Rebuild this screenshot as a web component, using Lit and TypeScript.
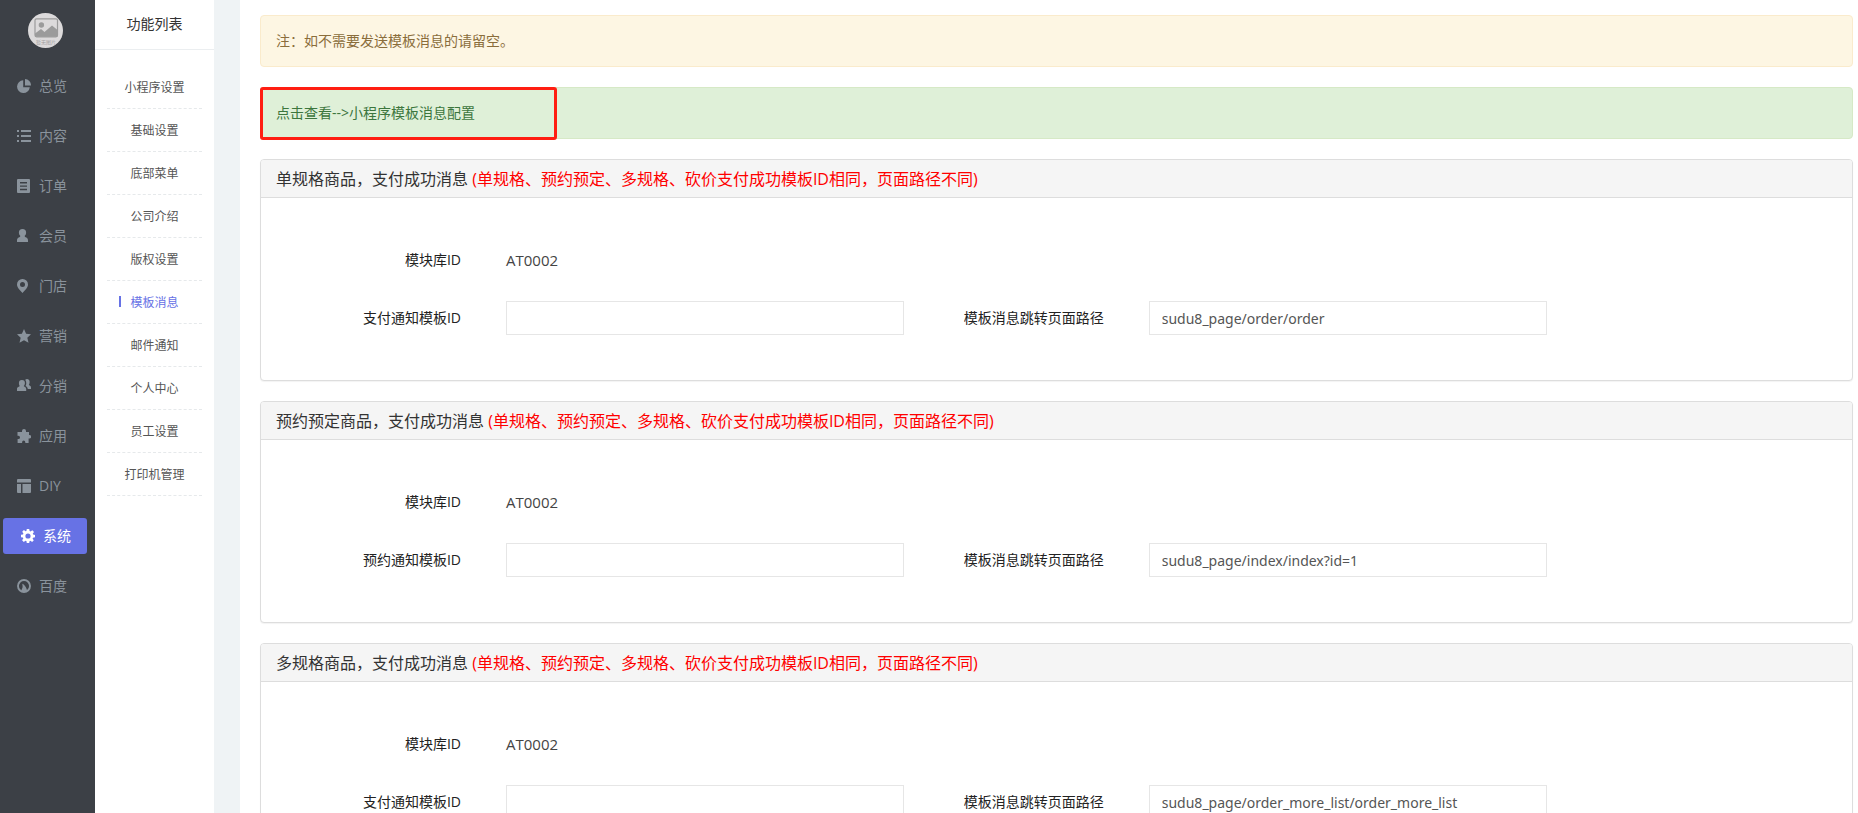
import { LitElement, html, css, svg, nothing } from "lit";
import { customElement, property } from "lit/decorators.js";

const icons: Record<string, unknown> = {
  overview: svg`<path d="M6.200 1.200A6.400 6.400 0 1 0 12.800 8.300H6.200Z"/><path d="M8 0v6.400h6A6.200 6.200 0 0 0 8 0Z"/>`,
  content: svg`<path d="M0 1h2v2H0zM4 1h10v2H4zM0 6h2v2H0zM4 6h10v2H4zM0 11h2v2H0zM4 11h10v2H4z"/>`,
  order: svg`<path fill-rule="evenodd" d="M1 0h11a1 1 0 0 1 1 1v12a1 1 0 0 1-1 1H1a1 1 0 0 1-1-1V1a1 1 0 0 1 1-1Zm2 3v1.400h7V3Zm0 3.400v1.400h7V6.400Zm0 3.400v1.400h7V9.800Z"/>`,
  member: svg`<path d="M5.500 0a3.600 3.600 0 0 1 3.600 3.700c0 1.500-.7 2.500-1.500 3.200.2.800.9 1.100 1.700 1.500 1.200.6 1.700 1.500 1.700 2.800V13H0v-1.800c0-1.300.5-2.200 1.700-2.800.8-.4 1.500-.7 1.700-1.500C2.600 6.200 1.900 5.200 1.900 3.700A3.600 3.600 0 0 1 5.500 0Z"/>`,
  store: svg`<path fill-rule="evenodd" d="M5.500 0A5.400 5.400 0 0 1 11 5.400C11 8.700 7.700 11.400 5.500 14 3.300 11.400 0 8.700 0 5.400A5.400 5.400 0 0 1 5.500 0Zm0 3a2.500 2.500 0 1 0 0 5 2.500 2.500 0 0 0 0-5Z"/>`,
  marketing: svg`<path d="M7 0l2.100 4.800 4.900.5-3.700 3.400 1.200 5L7 11.200l-4.500 2.500 1.200-5L0 5.300l4.900-.5Z"/>`,
  referral: svg`<path d="M5 1a2.900 2.900 0 0 1 2.900 3c0 1.300-.5 2.300-1.200 3 .3.900 2.500.9 2.500 3v2H0v-2c0-2.100 2.500-2.100 2.700-3C2.100 6.300 1.900 5.300 1.900 4A3 3 0 0 1 5 1Z"/><path d="M8.200.8A2.600 2.600 0 0 1 12.600 3c0 1.300-.2 2.100-.8 2.800.3.800 2.200.8 2.200 2.700V10h-3.200c-.2-1.900-1.200-2.600-2.200-3.100C9.700 4.800 9.400 2.500 8.200.8Z"/>`,
  apps: svg`<path d="M5 2a2 2 0 1 1 4 0v1h3v3h.4a1.800 1.800 0 1 1 0 3.600H11.600V14H8.300v-.8a1.600 1.600 0 0 0-3.200 0V14H.6V10h.8a1.600 1.600 0 0 0 0-3.200H.5V3H5Z"/>`,
  diy: svg`<path d="M1 0h12a1 1 0 0 1 1 1v2.500H0V1a1 1 0 0 1 1-1ZM0 5h4v9H1a1 1 0 0 1-1-1ZM5.500 5H14v8a1 1 0 0 1-1 1H5.500Z"/>`,
  system: svg`<path fill-rule="evenodd" d="M5.800 0h2.400l.4 2 1 .4L11.300 1.200 13 2.900 11.800 4.600l.3.900 1.900.4v2.400l-2 .4-.4 1 1.200 1.600-1.700 1.700-1.600-1.200-1 .4L8.200 14H5.800l-.4-1.900-1-.4-1.600 1.200-1.700-1.700 1.200-1.600-.4-1L0 8.200V5.800l2-.4.4-1L1.200 2.800 2.900 1.100l1.600 1.200.9-.3ZM7 4.400a2.600 2.600 0 1 0 0 5.200 2.600 2.600 0 0 0 0-5.200Z"/>`,
  baidu: svg`<circle cx="7" cy="7" r="6" fill="none" stroke="currentColor" stroke-width="1.900"/><path d="M5.300 4.800c1.600.6 4.500 3.600 4.900 7.200H4.500c-.3-1.700 1-2.400 1.100-4 .1-1.100-.2-2-.3-3.200Z"/>`,
};

const mainMenu = [
  { icon: "overview", label: "总览" },
  { icon: "content", label: "内容" },
  { icon: "order", label: "订单" },
  { icon: "member", label: "会员" },
  { icon: "store", label: "门店" },
  { icon: "marketing", label: "营销" },
  { icon: "referral", label: "分销" },
  { icon: "apps", label: "应用" },
  { icon: "diy", label: "DIY" },
  { icon: "system", label: "系统", active: true },
  { icon: "baidu", label: "百度" },
];

const subMenu = [
  "小程序设置", "基础设置", "底部菜单", "公司介绍", "版权设置",
  "模板消息", "邮件通知", "个人中心", "员工设置", "打印机管理",
];

const NOTE = "(单规格、预约预定、多规格、砍价支付成功模板ID相同，页面路径不同)";

const panels = [
  { title: "单规格商品，支付成功消息", field: "支付通知模板ID", path: "sudu8_page/order/order" },
  { title: "预约预定商品，支付成功消息", field: "预约通知模板ID", path: "sudu8_page/index/index?id=1" },
  { title: "多规格商品，支付成功消息", field: "支付通知模板ID", path: "sudu8_page/order_more_list/order_more_list" },
];

@customElement("main-nav")
class MainNav extends LitElement {
  static styles = css`
    :host { display: block; background: #3c4046; }
    .logo { display: block; width: 35px; height: 35px; margin: 13px auto 20px 28px; }
    .caption { font-size: 5px; fill: #a5a3a4; text-anchor: middle; }
    .list { display: flex; flex-direction: column; gap: 14px; padding: 0 8px 0 3px; }
    .item {
      display: flex; align-items: center; gap: 8px; height: 36px; padding-left: 14px;
      border-radius: 3px; color: #8a939c; font-size: 14px; line-height: 20px; text-decoration: none;
    }
    .item.active { background: #6772e5; color: #fff; padding-left: 18px; }
    .icon { width: 14px; height: 14px; fill: currentColor; }
  `;
  render() {
    return html`
      <svg class="logo" viewBox="0 0 35 35">
        <circle cx="17.500" cy="17.500" r="17.500" fill="#dcdadb"/>
        <rect x="7" y="5.800" width="22.500" height="18" rx="1.500" fill="#dcdadb" stroke="#9b9b9b" stroke-width="1.200"/>
        <circle cx="13.400" cy="12" r="2.700" fill="#9b9b9b"/>
        <path d="M7 20.500l6-4.500 3.500 3 7.500-6.500 5.500 4.500v6.800H7Z" fill="#9b9b9b"/>
        <text class="caption" x="18" y="31">暂无图片</text>
      </svg>
      <nav class="list">
        ${mainMenu.map((m) => html`
          <a class="item ${m.active ? "active" : ""}" href="#" aria-current=${m.active ? "page" : nothing}>
            <svg class="icon" viewBox="0 0 14 14" aria-hidden="true">${icons[m.icon]}</svg>${m.label}
          </a>`)}
      </nav>`;
  }
}

@customElement("sub-nav")
class SubNav extends LitElement {
  static styles = css`
    :host { display: block; background: #fff; }
    .title {
      margin: 0; height: 49px; line-height: 48px; border-bottom: 1px solid #ebeef0;
      text-align: center; font-size: 14px; font-weight: 400; color: #333;
    }
    .list { padding: 16px 12px 0; font-family: "Noto Sans CJK SC", sans-serif; }
    .item {
      position: relative; display: block; height: 42px; line-height: 42px; text-align: center;
      border-bottom: 1px dashed #e6e9eb; font-size: 12px; color: #555; text-decoration: none;
    }
    .item.active { color: #6772e5; }
    .item.active::before {
      content: ""; position: absolute; left: 12px; top: 15px; width: 2px; height: 11px; background: #6772e5;
    }
  `;
  render() {
    return html`
      <h2 class="title">功能列表</h2>
      <nav class="list">
        ${subMenu.map((s) => html`<a class="item ${s === "模板消息" ? "active" : ""}" href="#">${s}</a>`)}
      </nav>`;
  }
}

@customElement("message-panel")
class MessagePanel extends LitElement {
  @property() heading = "";
  @property() field = "";
  @property() path = "";
  static styles = css`
    :host {
      display: block; background: #fff; border: 1px solid #ddd; border-radius: 4px;
      box-shadow: 0 1px 1px rgba(0, 0, 0, 0.05);
    }
    .heading {
      margin: 0; padding: 10px 15px 8px; line-height: 19px; font-size: 16px; font-weight: 400; color: #333;
      background: #f5f5f5; border-bottom: 1px solid #ddd; border-radius: 3px 3px 0 0;
    }
    .note { color: #f00; }
    .body {
      display: grid; grid-template-columns: 245px 25% 245px 25%; row-gap: 24px; padding: 45px 0;
    }
    .label { padding-right: 45px; text-align: right; font-size: 14px; line-height: 34px; color: #222; }
    .value { grid-column: 2 / -1; font-size: 15px; line-height: 34px; color: #444; }
    .input {
      box-sizing: border-box; width: 100%; height: 34px; padding: 0 12px; border: 1px solid #e6e6e6;
      background: #fff; font-family: "Noto Sans", sans-serif; font-size: 14px; color: #555; outline: none;
    }
  `;
  render() {
    return html`
      <h3 class="heading">${this.heading} <span class="note">${NOTE}</span></h3>
      <div class="body">
        <span class="label">模块库ID</span>
        <span class="value">AT0002</span>
        <label class="label" for="tpl">${this.field}</label>
        <input class="input" id="tpl" type="text">
        <label class="label" for="path">模板消息跳转页面路径</label>
        <input class="input" id="path" type="text" .value=${this.path}>
      </div>`;
  }
}

@customElement("app-root")
class AppRoot extends LitElement {
  static styles = css`
    :host {
      display: grid; grid-template-columns: 95px 119px 1fr; height: 100vh; overflow: hidden;
      background: #eff3f5; font-family: "Open Sans", "Noto Sans CJK SC", sans-serif; font-size: 14px;
    }
    .main {
      display: flex; flex-direction: column; gap: 20px; margin-left: 26px; padding: 15px 5px 20px 20px;
      background: #fff; overflow-y: auto; scrollbar-width: none;
    }
    .main > * { flex: none; }
    .alert {
      position: relative; padding: 15px; border: 1px solid; border-radius: 4px; line-height: 20px;
    }
    .warning { color: #8a6d3b; background: #fdf6e3; border-color: #faebcc; }
    .success { color: #3c763d; background: #dff0d8; border-color: #d6e9c6; }
    .link { color: inherit; text-decoration: none; }
    .highlight {
      position: absolute; left: -1px; top: -1px; box-sizing: border-box; width: 297px; height: 53px;
      border: 3px solid #ff1e12; border-radius: 3px; pointer-events: none;
    }
  `;
  render() {
    return html`
      <main-nav></main-nav>
      <sub-nav></sub-nav>
      <main class="main">
        <div class="alert warning">注：如不需要发送模板消息的请留空。</div>
        <div class="alert success">
          <a class="link" href="#">点击查看--&gt;小程序模板消息配置</a>
          <span class="highlight"></span>
        </div>
        ${panels.map((p) => html`
          <message-panel .heading=${p.title} .field=${p.field} .path=${p.path}></message-panel>`)}
      </main>`;
  }
}
